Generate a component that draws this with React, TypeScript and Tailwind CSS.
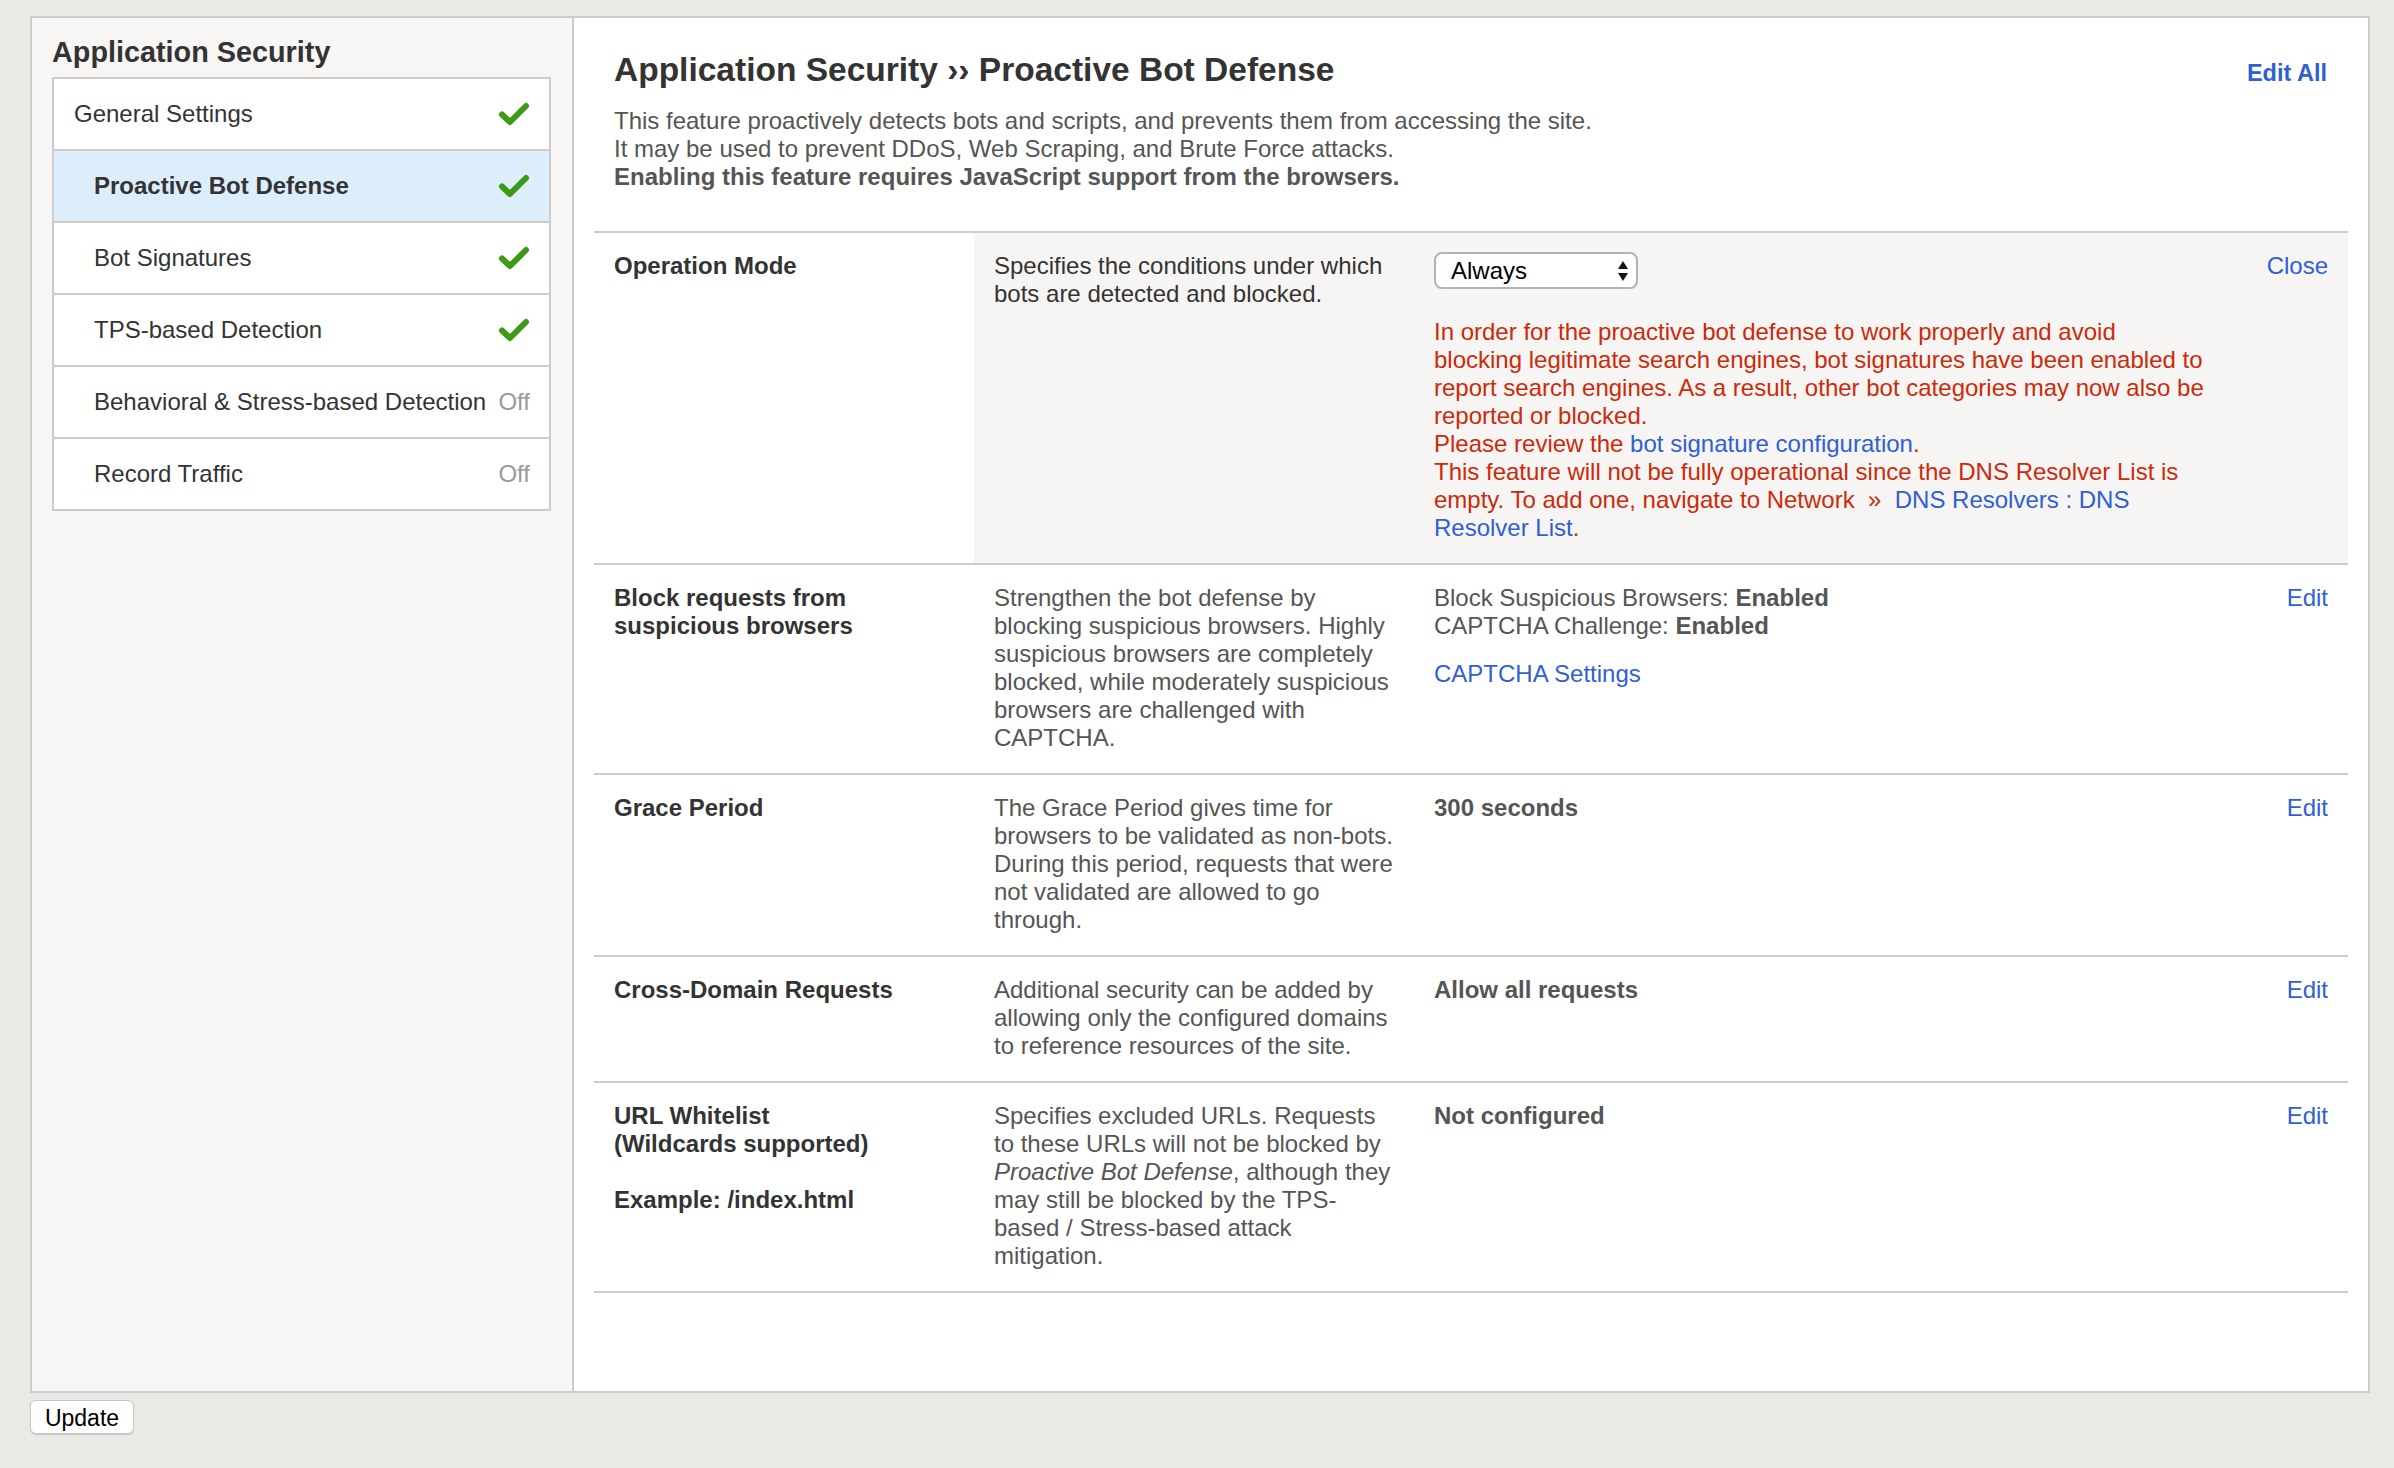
import React from "react";

type MenuEntry = {
  label: string;
  indent: boolean;
  active?: boolean;
  on: boolean;
};

const menu: MenuEntry[] = [
  { label: "General Settings", indent: false, on: true },
  { label: "Proactive Bot Defense", indent: true, active: true, on: true },
  { label: "Bot Signatures", indent: true, on: true },
  { label: "TPS-based Detection", indent: true, on: true },
  { label: "Behavioral & Stress-based Detection", indent: true, on: false },
  { label: "Record Traffic", indent: true, on: false },
];

const Check = () => (
  <svg width="32" height="24" viewBox="0 0 32 24" className="shrink-0">
    <path
      d="M4 12.5 L12 20 L28 4"
      fill="none"
      stroke="#3c9a14"
      strokeWidth="6"
      strokeLinecap="round"
      strokeLinejoin="round"
    />
  </svg>
);

const SelectArrows = () => (
  <svg width="12" height="26" viewBox="0 0 12 26">
    <path d="M6 3 L11 11 L1 11 Z" fill="#111" />
    <path d="M6 23 L11 15 L1 15 Z" fill="#111" />
  </svg>
);

type RowProps = {
  label: React.ReactNode;
  desc: React.ReactNode;
  value: React.ReactNode;
  action: string;
  editing?: boolean;
};

const Row = ({ label, desc, value, action, editing }: RowProps) => {
  const shade = editing ? "bg-[#f6f5f3]" : "";
  return (
    <div className="grid grid-cols-[380px_440px_803px_131px] border-t-2 border-[#cccccc]">
      <div className="px-[20px] pt-[19px] pb-[21px] font-bold text-[#333]">{label}</div>
      <div
        className={`${shade} pl-[20px] pr-[17px] pt-[19px] pb-[21px] ${
          editing ? "text-[#333]" : "text-[#555]"
        }`}
      >
        {desc}
      </div>
      <div className={`${shade} pl-[20px] pt-[19px] pb-[21px] text-[#555]`}>{value}</div>
      <div className={`${shade} pr-[20px] pt-[19px] text-right text-[#2f5fd5]`}>{action}</div>
    </div>
  );
};

const App = () => {
  return (
    <div className="min-h-screen bg-[#eae9e5] pl-[30px] pt-[16px] font-[family-name:Liberation_Sans,Arial,sans-serif]">
      <div className="flex h-[1377px] w-[2340px] border-2 border-[#cccccc]">
        {/* sidebar */}
        <aside className="w-[542px] shrink-0 border-r-2 border-[#cccccc] bg-[#f7f6f4] px-[20px] pt-[17px]">
          <h2 className="text-[28.8px] leading-[34px] font-bold text-[#333]">Application Security</h2>
          <div className="mt-[8px] w-[499px] border-x-2 border-b-2 border-[#cccccc] bg-white">
            {menu.map((item) => (
              <div
                key={item.label}
                className={`flex h-[72px] items-center justify-between border-t-2 border-[#cccccc] pr-[19px] text-[24px] text-[#333] ${
                  item.indent ? "pl-[40px]" : "pl-[20px]"
                } ${item.active ? "bg-[#dcedfc] font-bold" : ""}`}
              >
                <span>{item.label}</span>
                {item.on ? <Check /> : <span className="text-[#999]">Off</span>}
              </div>
            ))}
          </div>
        </aside>

        {/* main */}
        <main className="flex-1 bg-white">
          <div className="flex items-baseline justify-between pl-[40px] pr-[41px] pt-[32px]">
            <h1 className="text-[33.5px] leading-[40px] font-bold text-[#333]">
              Application Security ›› Proactive Bot Defense
            </h1>
            <a className="text-[23.5px] font-bold text-[#2f5fd5]">Edit All</a>
          </div>
          <div className="mt-[16px] px-[40px] text-[24px] leading-[28px] text-[#555]">
            <p>This feature proactively detects bots and scripts, and prevents them from accessing the site.</p>
            <p>It may be used to prevent DDoS, Web Scraping, and Brute Force attacks.</p>
            <p className="font-bold">Enabling this feature requires JavaScript support from the browsers.</p>
          </div>

          <div className="mx-[20px] mt-[40px] border-b-2 border-[#cccccc] text-[24px] leading-[28px]">
            <Row
              editing
              label="Operation Mode"
              desc="Specifies the conditions under which bots are detected and blocked."
              action="Close"
              value={
                <>
                  <div className="flex h-[37px] w-[204px] items-center justify-between rounded-[8px] border-2 border-[#b3b3b3] bg-white pl-[15px] pr-[7px] text-black">
                    <span>Always</span>
                    <SelectArrows />
                  </div>
                  <div className="mt-[29px] text-[#cc2a0a]">
                    In order for the proactive bot defense to work properly and avoid
                    <br />
                    blocking legitimate search engines, bot signatures have been enabled to report search engines.
                    As a result, other bot categories may now also be reported or blocked.
                    <br />
                    Please review the <a className="text-[#2f5fd5]">bot signature configuration</a>.
                    <br />
                    This feature will not be fully operational since the DNS Resolver List is empty. To add one,
                    navigate to Network{"\u00a0 »\u00a0 "}
                    <a className="text-[#2f5fd5]">DNS Resolvers : DNS Resolver List</a>.
                  </div>
                </>
              }
            />
            <Row
              label="Block requests from suspicious browsers"
              desc="Strengthen the bot defense by blocking suspicious browsers. Highly suspicious browsers are completely blocked, while moderately suspicious browsers are challenged with CAPTCHA."
              action="Edit"
              value={
                <>
                  <p>
                    Block Suspicious Browsers: <b>Enabled</b>
                  </p>
                  <p>
                    CAPTCHA Challenge: <b>Enabled</b>
                  </p>
                  <a className="mt-[20px] block text-[#2f5fd5]">CAPTCHA Settings</a>
                </>
              }
            />
            <Row
              label="Grace Period"
              desc="The Grace Period gives time for browsers to be validated as non-bots. During this period, requests that were not validated are allowed to go through."
              action="Edit"
              value={<b>300 seconds</b>}
            />
            <Row
              label="Cross-Domain Requests"
              desc="Additional security can be added by allowing only the configured domains to reference resources of the site."
              action="Edit"
              value={<b>Allow all requests</b>}
            />
            <Row
              label={
                <>
                  URL Whitelist
                  <br />
                  (Wildcards supported)
                  <br />
                  <br />
                  Example: /index.html
                </>
              }
              desc={
                <>
                  Specifies excluded URLs. Requests to these URLs will not be blocked by{" "}
                  <i>Proactive Bot Defense</i>, although they may still be blocked by the TPS-based / Stress-based
                  attack mitigation.
                </>
              }
              action="Edit"
              value={<b>Not configured</b>}
            />
          </div>
        </main>
      </div>

      <button className="mt-[7px] h-[34px] w-[104px] rounded-[6px] border border-[#c6c6c6] bg-white text-[23px] text-black shadow-[0_1px_1px_rgba(0,0,0,0.15)]">
        Update
      </button>
    </div>
  );
};

export default App;
